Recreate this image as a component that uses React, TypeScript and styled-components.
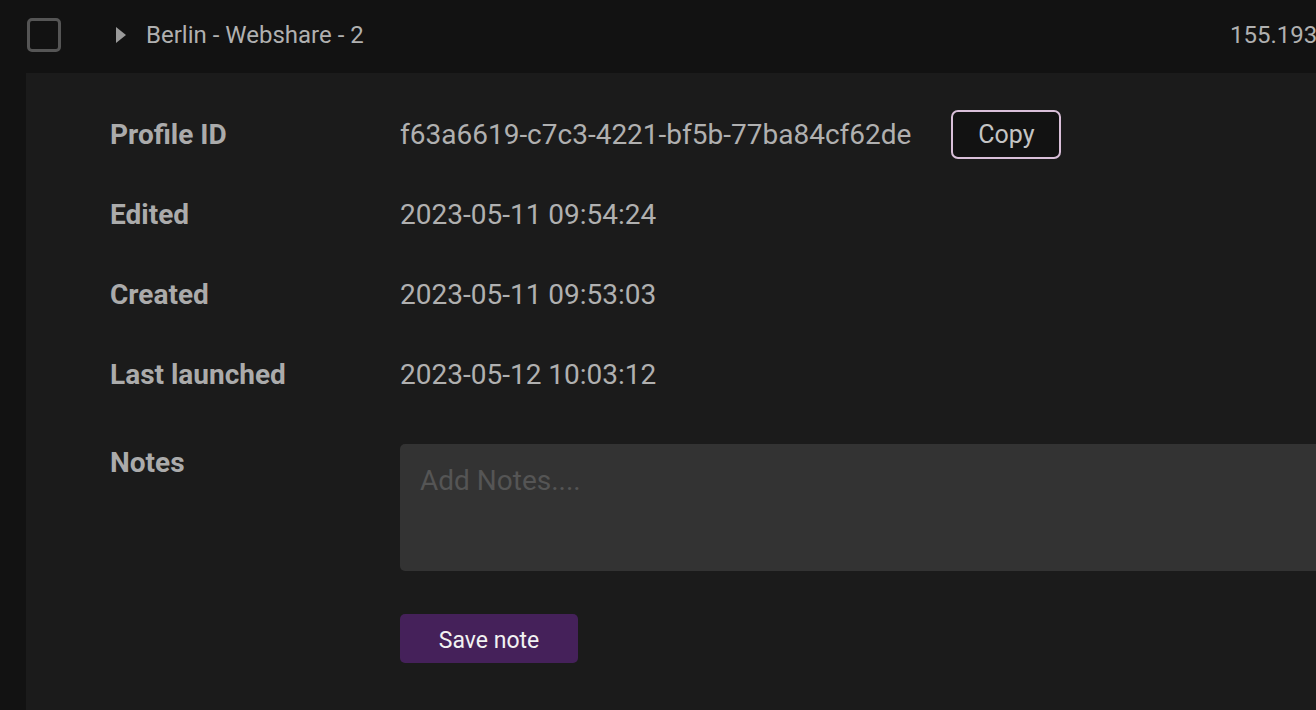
import React from "react";
import styled, { createGlobalStyle } from "styled-components";

const Global = createGlobalStyle`
  html, body { margin: 0; padding: 0; background: #121212; overflow: hidden; }
  body { font-family: Roboto, "Liberation Sans", sans-serif; }
  * { box-sizing: border-box; }
`;

const Page = styled.div`
  width: 1316px;
  height: 710px;
  overflow: hidden;
  background: #121212;
`;

const HeaderRow = styled.div`
  display: flex;
  align-items: center;
  height: 73px;
  padding-bottom: 4px;
  white-space: nowrap;
`;

const Checkbox = styled.div`
  width: 34px;
  height: 34px;
  margin-left: 27px;
  border: 3px solid #555;
  border-radius: 5px;
  flex: none;
`;

const Caret = styled.div`
  width: 0;
  height: 0;
  margin-left: 55px;
  border-top: 8.5px solid transparent;
  border-bottom: 8.5px solid transparent;
  border-left: 10px solid #9a9a9a;
  flex: none;
`;

const Name = styled.div`
  margin-left: 20px;
  width: 1084px;
  flex: none;
  font-size: 24px;
  color: #b0b0b0;
`;

const Ip = styled.div`
  font-size: 24px;
  color: #b0b0b0;
  flex: none;
`;

const Panel = styled.div`
  margin-left: 26px;
  background: #1b1b1b;
  padding: 36px 0 60px 84px;
  min-height: 637px;
`;

const InfoGrid = styled.div`
  display: grid;
  grid-template-columns: 290px 1fr;
  grid-auto-rows: 50px;
  row-gap: 30px;
  align-items: center;
`;

const Label = styled.div`
  font-size: 28px;
  font-weight: 700;
  color: #ababab;
  white-space: nowrap;
`;

const Value = styled.div`
  display: flex;
  align-items: center;
  font-size: 28px;
  color: #b0b0b0;
  white-space: nowrap;
`;

const CopyButton = styled.button`
  margin-left: 40px;
  width: 110px;
  height: 49px;
  background: #121212;
  border: 2px solid #d9bfd9;
  border-radius: 7px;
  color: #c4c4c4;
  font-family: Roboto, "Liberation Sans", sans-serif;
  font-size: 25px;
  padding: 0;
`;

const NotesGrid = styled.div`
  display: grid;
  grid-template-columns: 290px 1fr;
  margin-top: 45px;
`;

const NotesLabel = styled(Label)`
  padding-top: 2px;
  line-height: 33px;
`;

const NotesColumn = styled.div`
  display: flex;
  flex-direction: column;
  align-items: flex-start;
  gap: 43px;
`;

const NotesArea = styled.textarea`
  width: 1000px;
  height: 127px;
  background: #333333;
  border: none;
  border-radius: 5px;
  padding: 20px 20px;
  resize: none;
  font-family: Roboto, "Liberation Sans", sans-serif;
  font-size: 28px;
  line-height: 33px;
  color: #c0c0c0;
  outline: none;
  &::placeholder { color: #555; }
`;

const SaveButton = styled.button`
  width: 178px;
  height: 49px;
  background: #45215a;
  border: none;
  border-radius: 5px;
  color: #f2f2f2;
  font-family: Roboto, "Liberation Sans", sans-serif;
  font-size: 23px;
  padding: 4px 0 0;
`;

const rows: [string, string][] = [
  ["Edited", "2023-05-11 09:54:24"],
  ["Created", "2023-05-11 09:53:03"],
  ["Last launched", "2023-05-12 10:03:12"],
];

export default function App() {
  return (
    <Page>
      <Global />
      <HeaderRow>
        <Checkbox />
        <Caret />
        <Name>Berlin - Webshare - 2</Name>
        <Ip>155.193</Ip>
      </HeaderRow>
      <Panel>
        <InfoGrid>
          <Label>Profile ID</Label>
          <Value>
            f63a6619-c7c3-4221-bf5b-77ba84cf62de
            <CopyButton>Copy</CopyButton>
          </Value>
          {rows.map(([l, v]) => (
            <React.Fragment key={l}>
              <Label>{l}</Label>
              <Value>{v}</Value>
            </React.Fragment>
          ))}
        </InfoGrid>
        <NotesGrid>
          <NotesLabel>Notes</NotesLabel>
          <NotesColumn>
            <NotesArea placeholder="Add Notes...." />
            <SaveButton>Save note</SaveButton>
          </NotesColumn>
        </NotesGrid>
      </Panel>
    </Page>
  );
}
